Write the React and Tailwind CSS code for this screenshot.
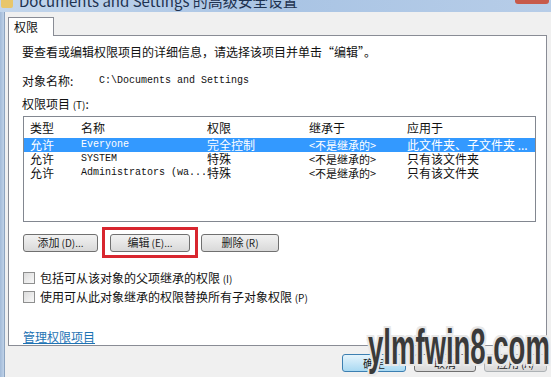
import React from 'react';

const cjk = { fontFamily: '"Noto Sans CJK SC", "Noto Sans", sans-serif' };
const mono = { fontFamily: '"Liberation Mono", "Noto Sans CJK SC", monospace' };

const rows = [
  { type: '允许', name: 'Everyone', perm: '完全控制', from: '<不是继承的>', to: '此文件夹、子文件夹 ...', sel: true },
  { type: '允许', name: 'SYSTEM', perm: '特殊', from: '<不是继承的>', to: '只有该文件夹' },
  { type: '允许', name: 'Administrators (wa...', perm: '特殊', from: '<不是继承的>', to: '只有该文件夹' },
];

const Btn = ({ children, className = '' }) => (
  <div
    className={`h-[18px] flex items-center justify-center border border-[#707070] rounded-[3px] bg-gradient-to-b from-[#f2f2f2] to-[#d9d9d9] text-[11px] text-[#222] whitespace-nowrap ${className}`}
  >
    {children}
  </div>
);

const Check = ({ children }) => (
  <div className="flex items-center gap-[5px] h-[16px]">
    <div className="w-[12px] h-[12px] border border-[#8e8f8f] bg-gradient-to-br from-[#dcdcdc] to-[#f8f8f8]" />
    <span className="text-[12px] text-[#111]">{children}</span>
  </div>
);

export default function App() {
  return (
    <div className="w-[551px] h-[377px] overflow-hidden bg-[#f0f0f0] flex flex-col relative" style={cjk}>
      {/* title bar */}
      <div className="h-[12px] bg-gradient-to-r from-[#c3d6ec] via-[#a9c4e4] to-[#b7cde8] flex items-end overflow-hidden relative shrink-0">
        <div className="w-[12px] h-[8px] ml-[1px] bg-[#e8c66a] rounded-b-[2px] self-start" />
        <span className="ml-[6px] text-[15px] leading-[15px] text-[#1e3250] -mb-[2px] pb-[6px] whitespace-nowrap">
          Documents and Settings 的高级安全设置
        </span>
        <div className="absolute right-[2px] top-0 w-[34px] h-[4px] bg-[#c75a4a] rounded-b-[3px]" />
      </div>

      <div className="flex flex-1">
        {/* left window frame */}
        <div className="w-[7px] bg-gradient-to-r from-[#a2bad8] to-[#bfd2e8] border-r border-[#8da4c0]" />

        <div className="flex-1 flex flex-col pl-[3px] pr-[4px]">
          {/* tab */}
          <div className="pt-[5px] flex">
            <div className="w-[46px] h-[19px] border border-b-0 border-[#898c95] bg-white text-[12px] pl-[5px] leading-[18px] text-[#111] -mb-px relative z-10">
              权限
            </div>
          </div>

          {/* panel */}
          <div className="h-[311px] border border-[#898c95] bg-white pl-[13px] pr-[10px] flex flex-col">
            <div className="mt-[8px] text-[12px] text-[#111] leading-[16px]">
              要查看或编辑权限项目的详细信息，请选择该项目并单击“编辑”。
            </div>

            <div className="mt-[13px] flex items-center text-[12px] text-[#111] leading-[16px]">
              <span className="w-[77px]">对象名称:</span>
              <span className="text-[10px]" style={mono}>C:\Documents and Settings</span>
            </div>

            <div className="mt-[7px] text-[12px] text-[#111] leading-[16px]">
              权限项目 <span className="text-[10px]">(T)</span>:
            </div>

            {/* list */}
            <div className="mt-[3px] ml-[1px] w-[513px] h-[112px] border border-[#828790] bg-white overflow-hidden">
              <div className="h-[21px] flex items-center text-[12px] text-[#111]">
                <span className="w-[57px] pl-[6px]">类型</span>
                <span className="w-[126px]">名称</span>
                <span className="w-[102px]">权限</span>
                <span className="w-[98px]">继承于</span>
                <span className="flex-1">应用于</span>
              </div>
              {rows.map((r) => (
                <div
                  key={r.name}
                  className={`h-[14px] flex items-center text-[12px] leading-[14px] whitespace-nowrap ${r.sel ? 'bg-[#3399ff] text-white' : 'text-[#111]'}`}
                >
                  <span className="w-[57px] pl-[6px] shrink-0">{r.type}</span>
                  <span className="w-[126px] text-[10px] shrink-0" style={mono}>{r.name}</span>
                  <span className="w-[102px] shrink-0">{r.perm}</span>
                  <span className="w-[98px] text-[11px] shrink-0">{r.from}</span>
                  <span className="flex-1 overflow-hidden">{r.to}</span>
                </div>
              ))}
            </div>

            {/* action buttons */}
            <div className="mt-[5px] flex items-center relative">
              <Btn className="w-[75px] ml-[1px]">添加 <span className="text-[10px] ml-[2px]">(D)...</span></Btn>
              <div className="ml-[4px] w-[96px] h-[31px] border-[3px] border-[#d8262f] flex items-center justify-center">
                <Btn className="w-[80px]">编辑 <span className="text-[10px] ml-[2px]">(E)...</span></Btn>
              </div>
              <Btn className="w-[78px] ml-[3px]">删除 <span className="text-[10px] ml-[2px]">(R)</span></Btn>
            </div>

            <div className="mt-[12px] ml-[1px] flex flex-col gap-[3px]">
              <Check>包括可从该对象的父项继承的权限 <span className="text-[10px]">(I)</span></Check>
              <Check>使用可从此对象继承的权限替换所有子对象权限 <span className="text-[10px]">(P)</span></Check>
            </div>

            <div className="mt-[24px] ml-[1px] text-[12px] text-[#1e73b4] underline leading-[16px]">
              管理权限项目
            </div>
          </div>

          {/* bottom buttons */}
          <div className="flex justify-end items-center mt-[8px] gap-[8px]">
            <div className="w-[64px] h-[18px] border border-[#3c7fb1] rounded-[3px] bg-gradient-to-b from-[#e5f4fc] to-[#a9d9f2] text-[11px] flex items-center justify-center text-[#222]">
              确定
            </div>
            <Btn className="w-[62px]">取消</Btn>
            <Btn className="w-[63px] text-[#9a9a9a] border-[#adb2b5]">应用 <span className="text-[10px] ml-[2px]">(A)</span></Btn>
          </div>
        </div>
      </div>

      {/* watermark */}
      <div
        className="absolute left-[368px] top-[320px] text-[50px] leading-[54px] text-[#3a3a3a] font-bold pointer-events-none whitespace-nowrap"
        style={{
          fontFamily: '"Liberation Sans", sans-serif',
          transform: 'scaleX(0.55)',
          transformOrigin: 'left',
          textShadow: '3px 0 #e8e8e8, -3px 0 #e8e8e8, 0 2px #e8e8e8, 0 -2px #e8e8e8, 3px 2px #e8e8e8, -3px -2px #e8e8e8, 3px -2px #e8e8e8, -3px 2px #e8e8e8',
        }}
      >
        ylmfwin8.com
      </div>
    </div>
  );
}
